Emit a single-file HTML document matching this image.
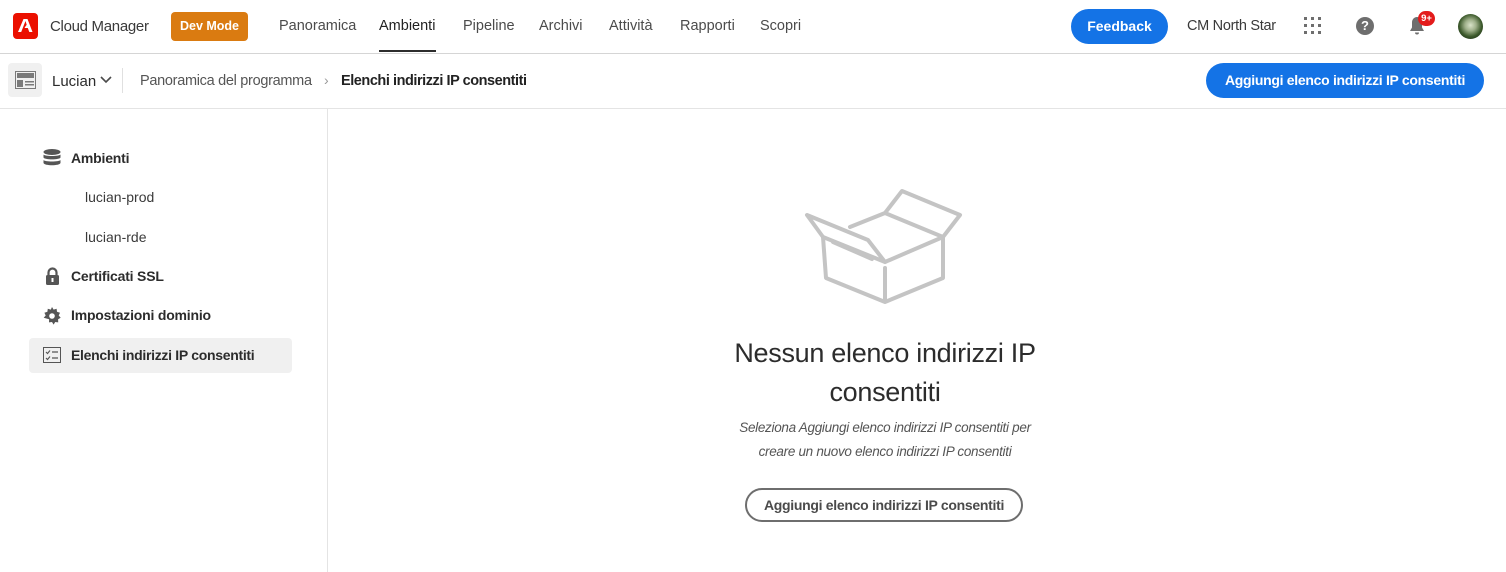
<!DOCTYPE html>
<html><head><meta charset="utf-8"><style>
*{margin:0;padding:0;box-sizing:border-box}
body{width:1506px;height:572px;overflow:hidden;background:#fff;font-family:"Liberation Sans",sans-serif;color:#2c2c2c;position:relative}
.a{position:absolute;white-space:nowrap}
.nav{font-size:14.5px;color:#4b4b4b;top:18px}
</style></head><body>
<div class="a" style="left:0;top:53px;width:1506px;height:1px;background:#d5d5d5"></div>
<div class="a" style="left:0;top:108px;width:1506px;height:1px;background:#e4e4e4"></div>
<div class="a" style="left:327px;top:109px;width:1px;height:463px;background:#e4e4e4"></div>

<div class="a" style="left:13px;top:13px;width:25px;height:26px;background:#eb1000;border-radius:4px"></div>
<svg class="a" style="left:17px;top:17px" width="17" height="17" viewBox="0 0 17 17"><path d="M6.5 2h4l5 13h-3.2l-1.5-4H7.5l2-3.2 1 2.7L8.5 4 4.2 15H1z" fill="#fff"/></svg>
<div class="a" style="left:50px;top:18px;font-size:15px;color:#3a3a3a;letter-spacing:-0.3px">Cloud Manager</div>
<div class="a" style="left:171px;top:12px;width:77px;height:29px;background:#da7b11;border-radius:4px;color:#fff;font-size:12.5px;font-weight:bold;text-align:center;line-height:29px">Dev Mode</div>
<div class="a nav" style="left:279px">Panoramica</div>
<div class="a nav" style="left:379px;color:#222">Ambienti</div>
<div class="a" style="left:379px;top:50px;width:57px;height:2px;background:#2c2c2c"></div>
<div class="a nav" style="left:463px">Pipeline</div>
<div class="a nav" style="left:539px">Archivi</div>
<div class="a nav" style="left:609px">Attività</div>
<div class="a nav" style="left:680px">Rapporti</div>
<div class="a nav" style="left:760px">Scopri</div>

<div class="a" style="left:1071px;top:9px;width:97px;height:35px;background:#1473e6;border-radius:18px;color:#fff;font-size:14px;font-weight:bold;text-align:center;line-height:35px">Feedback</div>
<div class="a" style="left:1187px;top:18px;font-size:14.5px;color:#3a3a3a;letter-spacing:-0.3px">CM North Star</div>
<svg class="a" style="left:1304px;top:17px" width="18" height="18"><g fill="#6e6e6e"><rect x="0" y="0" width="3" height="3"/><rect x="7" y="0" width="3" height="3"/><rect x="14" y="0" width="3" height="3"/><rect x="0" y="7" width="3" height="3"/><rect x="7" y="7" width="3" height="3"/><rect x="14" y="7" width="3" height="3"/><rect x="0" y="14" width="3" height="3"/><rect x="7" y="14" width="3" height="3"/><rect x="14" y="14" width="3" height="3"/></g></svg>
<div class="a" style="left:1356px;top:17px;width:18px;height:18px;border-radius:50%;background:#6e6e6e;color:#fff;font-size:13px;font-weight:bold;text-align:center;line-height:18px">?</div>
<svg class="a" style="left:1408px;top:16px" width="18" height="20"><path d="M9 1c-3 0-5 2.5-5 5.5v5L2 15h14l-2-3.5v-5C14 3.5 12 1 9 1zM7 16.5h4a2 2 0 0 1-4 0z" fill="#6e6e6e"/></svg>
<div class="a" style="left:1418px;top:11px;width:17px;height:15px;border-radius:8px;background:#e31b1b;color:#fff;font-size:9.5px;font-weight:bold;text-align:center;line-height:15px">9+</div>
<div class="a" style="left:1458px;top:14px;width:25px;height:25px;border-radius:50%;background:radial-gradient(circle at 50% 45%,#d9e3c9 0,#9fb08a 30%,#3d5a2c 60%,#0d1a0b 100%)"></div>

<div class="a" style="left:8px;top:63px;width:34px;height:34px;background:#f0f0f0;border-radius:4px"></div>
<svg class="a" style="left:15px;top:71px" width="21" height="18"><rect x="0.5" y="0.5" width="20" height="17" fill="none" stroke="#7a7a7a"/><rect x="2" y="2" width="17" height="5" fill="#7a7a7a"/><rect x="2" y="9" width="6" height="7" fill="#7a7a7a"/><rect x="10" y="10" width="9" height="1.5" fill="#7a7a7a"/><rect x="10" y="13" width="9" height="1.5" fill="#7a7a7a"/></svg>
<div class="a" style="left:52px;top:73px;font-size:15px;color:#2c2c2c">Lucian</div>
<svg class="a" style="left:100px;top:76px" width="12" height="8"><path d="M1 1l5 5 5-5" fill="none" stroke="#4b4b4b" stroke-width="1.6"/></svg>
<div class="a" style="left:122px;top:68px;width:1px;height:25px;background:#e0e0e0"></div>
<div class="a" style="left:140px;top:73px;font-size:14.5px;color:#555;letter-spacing:-0.3px">Panoramica del programma</div>
<div class="a" style="left:324px;top:72px;font-size:14px;color:#999">›</div>
<div class="a" style="left:341px;top:73px;font-size:14.5px;color:#222;font-weight:bold;letter-spacing:-0.45px">Elenchi indirizzi IP consentiti</div>
<div class="a" style="left:1206px;top:63px;width:278px;height:35px;background:#1473e6;border-radius:18px;color:#fff;font-size:14px;font-weight:bold;text-align:center;line-height:35px;letter-spacing:-0.3px">Aggiungi elenco indirizzi IP consentiti</div>

<svg class="a" style="left:43px;top:149px" width="18" height="17"><g fill="#555"><ellipse cx="9" cy="3" rx="8.5" ry="3"/><path d="M.5 5.5c1 2 16 2 17 0v3c-1 2.5-16 2.5-17 0z"/><path d="M.5 11c1 2 16 2 17 0v3c-1 3-16 3-17 0z"/></g></svg>
<div class="a" style="left:71px;top:150px;font-size:14px;font-weight:bold;color:#2c2c2c;letter-spacing:-0.2px">Ambienti</div>
<div class="a" style="left:85px;top:189px;font-size:14px;color:#3a3a3a">lucian-prod</div>
<div class="a" style="left:85px;top:229px;font-size:14px;color:#3a3a3a">lucian-rde</div>
<svg class="a" style="left:45px;top:267px" width="15" height="18"><path d="M3.5 8V5.5a4 4 0 0 1 8 0V8" fill="none" stroke="#555" stroke-width="2.2"/><rect x="1" y="8" width="13" height="10" rx="1.5" fill="#555"/><rect x="6.5" y="11" width="2" height="4" fill="#fff"/></svg>
<div class="a" style="left:71px;top:268px;font-size:14px;font-weight:bold;color:#2c2c2c;letter-spacing:-0.2px">Certificati SSL</div>
<svg class="a" style="left:43px;top:307px" width="18" height="18" viewBox="0 0 18 18"><path d="M9 0l1.6 2.6 3-.8.4 3 3 .9-1.3 2.8 2 2.3-2.6 1.5.1 3.1-3-.4-1.6 2.6-1.6-2.6-3 .4.1-3.1L.7 10.8l2-2.3L1.4 5.7l3-.9.4-3 3 .8z" fill="#555"/><circle cx="9" cy="9" r="2.8" fill="#fff"/></svg>
<div class="a" style="left:71px;top:307px;font-size:14px;font-weight:bold;color:#2c2c2c;letter-spacing:-0.2px">Impostazioni dominio</div>
<div class="a" style="left:29px;top:338px;width:263px;height:35px;background:#f0f0f0;border-radius:4px"></div>
<svg class="a" style="left:43px;top:347px" width="18" height="16"><rect x="0.5" y="0.5" width="17" height="15" fill="none" stroke="#555"/><path d="M3 5l1.5 1.5L7 3.5M3 11l1.5 1.5L7 9.5" fill="none" stroke="#555" stroke-width="1.1"/><path d="M9 5h6M9 11h6" stroke="#555" stroke-width="1.3"/></svg>
<div class="a" style="left:71px;top:347px;font-size:14px;font-weight:bold;color:#2c2c2c;letter-spacing:-0.3px">Elenchi indirizzi IP consentiti</div>

<svg class="a" style="left:0;top:0" width="1506" height="572"><g fill="none" stroke="#c4c4c4" stroke-width="4" stroke-linejoin="round" stroke-linecap="round"><path d="M823 237L826 278L885 302L943 278L943 237L885 262Z"/><path d="M823 237L807 215L868 240L885 262"/><path d="M943 237L960 215L902 191L885 213L943 237"/><path d="M885 213L850 227"/><path d="M833 242L872 259"/><path d="M885 268L885 300"/></g></svg>
<div class="a" style="left:628px;width:514px;top:334px;text-align:center;font-size:27px;color:#2c2c2c;line-height:39px;white-space:normal;letter-spacing:-0.3px">Nessun elenco indirizzi IP<br>consentiti</div>
<div class="a" style="left:628px;width:514px;top:416px;text-align:center;font-size:13.5px;font-style:italic;color:#555;line-height:24px;white-space:normal;letter-spacing:-0.3px">Seleziona Aggiungi elenco indirizzi IP consentiti per<br>creare un nuovo elenco indirizzi IP consentiti</div>
<div class="a" style="left:745px;top:488px;width:278px;height:34px;border:2px solid #6e6e6e;border-radius:17px;text-align:center;line-height:30px;font-size:14px;font-weight:bold;color:#4b4b4b;letter-spacing:-0.3px">Aggiungi elenco indirizzi IP consentiti</div>
</body></html>
